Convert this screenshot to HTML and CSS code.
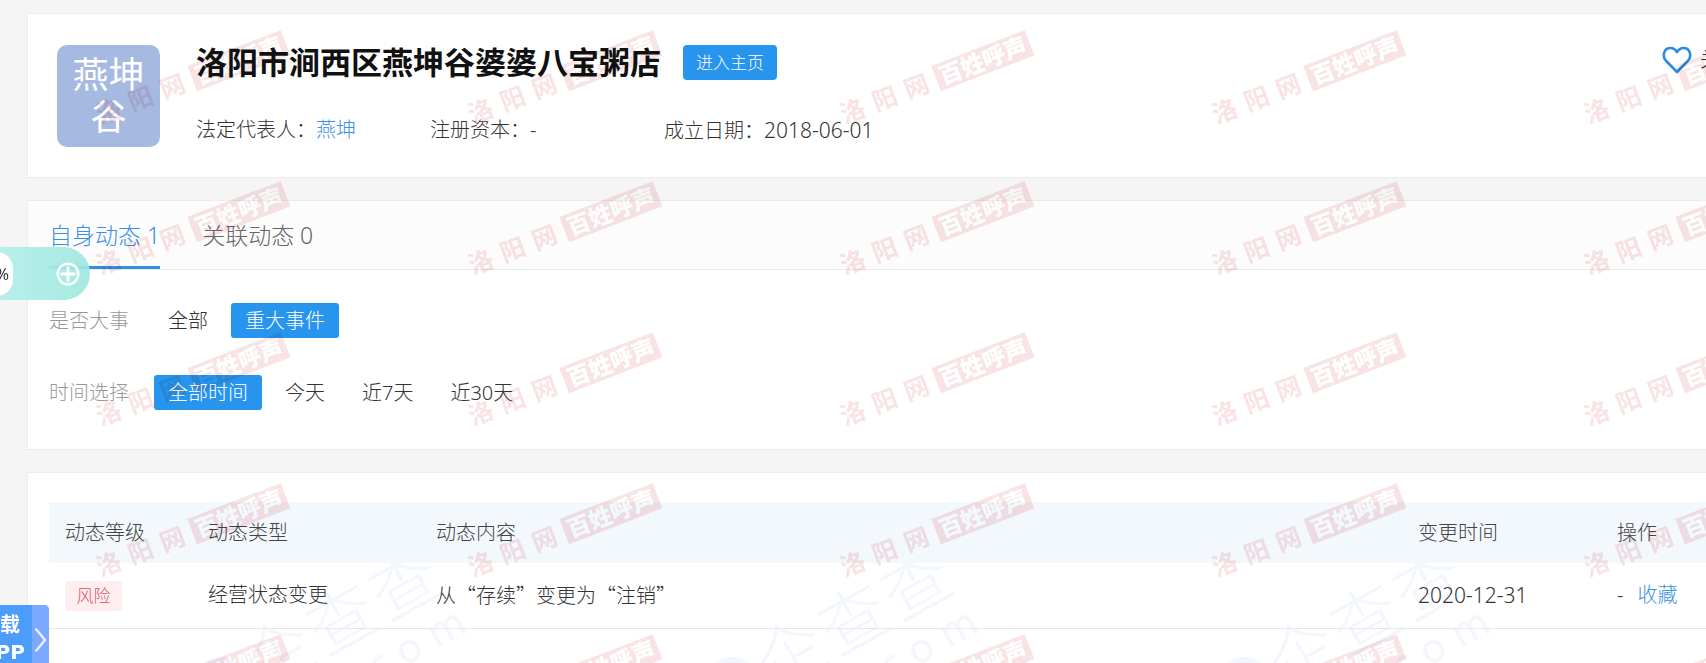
FILE: index.html
```
<!DOCTYPE html>
<html lang="zh-CN">
<head>
    <meta charset="UTF-8">
    <meta name="viewport" content="width=device-width, initial-scale=1.0">
    <title>洛阳市涧西区燕坤谷婆婆八宝粥店</title>
    <link rel="stylesheet" href="styles.css">
</head>
<body>
    <main class="container">
        <section class="card company">
            <div class="logo">燕坤谷</div>
            <div class="company-main">
                <div class="title-row">
                    <h1>洛阳市涧西区燕坤谷婆婆八宝粥店</h1>
                    <button type="button" class="btn-home">进入主页</button>
                </div>
                <div class="info-row">
                    <div class="info">法定代表人：<a href="#">燕坤</a></div>
                    <div class="info">注册资本：-</div>
                    <div class="info">成立日期：<span class="date">2018-06-01</span></div>
                </div>
            </div>
            <button type="button" class="follow">
                <svg width="30" height="28" viewBox="0 0 30 28" fill="none" stroke="#2b8be0" stroke-width="2.6" stroke-linejoin="round">
                    <path d="M15 26 L4.2 15 C-0.5 9.8 2.2 2 8.4 2 C11.4 2 13.6 3.6 15 6.2 C16.4 3.6 18.6 2 21.6 2 C27.8 2 30.5 9.8 25.8 15 Z"/>
                </svg>
                <span>关注</span>
            </button>
        </section>

        <section class="card">
            <nav class="tabs">
                <a href="#" class="tab active">自身动态 1</a>
                <a href="#" class="tab">关联动态 0</a>
            </nav>
            <div class="filters">
                <div class="filter">
                    <span class="filter-name">是否大事</span>
                    <button type="button" class="option">全部</button>
                    <button type="button" class="option on">重大事件</button>
                </div>
                <div class="filter">
                    <span class="filter-name">时间选择</span>
                    <button type="button" class="option on">全部时间</button>
                    <button type="button" class="option">今天</button>
                    <button type="button" class="option">近7天</button>
                    <button type="button" class="option">近30天</button>
                </div>
            </div>
        </section>

        <section class="card list">
            <div class="brand-marks" id="brandMarks" aria-hidden="true"></div>
            <table>
                <thead>
                    <tr>
                        <th class="col-level">动态等级</th>
                        <th class="col-type">动态类型</th>
                        <th>动态内容</th>
                        <th class="col-time">变更时间</th>
                        <th class="col-action">操作</th>
                    </tr>
                </thead>
                <tbody>
                    <tr>
                        <td><span class="risk">风险</span></td>
                        <td>经营状态变更</td>
                        <td class="quote">从“存续”变更为“注销”</td>
                        <td><span class="date">2020-12-31</span></td>
                        <td>-<a href="#" class="collect">收藏</a></td>
                    </tr>
                </tbody>
            </table>
        </section>
    </main>

    <div class="stamps" id="stamps" aria-hidden="true"></div>

    <div class="speed">
        <span class="speed-num">%</span>
        <svg width="24" height="24" viewBox="0 0 24 24" fill="none" stroke="#fff">
            <circle cx="12" cy="12" r="10.3" stroke-width="2.4"/>
            <path d="M12 4.5V19.5M4.5 12H19.5" stroke-width="3"/>
        </svg>
    </div>

    <div class="app">
        <a href="#" class="app-text">下载<br>APP</a>
        <button type="button" class="app-arrow" aria-label="展开">
            <svg width="13" height="26" viewBox="0 0 13 26" fill="none" stroke="#e9f1ff" stroke-width="2.4">
                <path d="M1.5 1.5L11 13L1.5 24.5"/>
            </svg>
        </button>
    </div>

    <script>
        let stamps = document.getElementById("stamps");
        let brandMarks = document.getElementById("brandMarks");

        // 5 x 5 水印
        for(let i=0;i<25;i++){
            stamps.innerHTML += `<div class="stamp-cell"><div class="stamp">
                <span>洛</span><span>阳</span><span>网</span><b>百姓呼声</b>
            </div></div>`;
        }

        // 列表背景
        for(let i=0;i<4;i++){
            brandMarks.innerHTML += `<div class="brand-cell"><div class="brand">
                <div class="brand-name"><i></i><span>企</span><span>查</span><span>查</span></div>
                <div class="brand-site"><span>.</span><span>c</span><span>o</span><span>m</span></div>
            </div></div>`;
        }
    </script>
</body>
</html>
```
FILE: styles.css
```
*{
    box-sizing: border-box;
}
body{
    margin: 0;
    height: 100vh;
    overflow: hidden;
    background: #f5f5f5;
    color: #333;
    font: 300 20px/30px "Noto Sans", "Noto Sans CJK SC", sans-serif;
}
a{
    color: #3b8ee8;
    text-decoration: none;
}
button{
    padding: 0;
    border: 0;
    background: none;
    color: inherit;
    font: inherit;
    cursor: pointer;
}
/* 內容比視窗寬一點 */
.container{
    display: flex;
    flex-direction: column;
    gap: 22px;
    margin: 13px -60px 0 27px;
}
.card{
    position: relative;
    border: 1px solid #ececec;
    background: #fff;
}
.date{
    font-size: 21px;
}

/* 公司資料 */
.company{
    display: flex;
    align-items: flex-start;
    padding: 31px 25px 30px 29px;
}
.logo{
    width: 103px;
    height: 102px;
    padding: 9px 15px;
    border-radius: 10px;
    background: #a6bae1;
    color: #fff;
    font-size: 36px;
    font-weight: 400;
    line-height: 42px;
    text-align: center;
}
.company-main{
    flex: 1;
    margin-left: 36px;
}
.title-row{
    display: flex;
    align-items: center;
    gap: 22px;
    height: 35px;
}
h1{
    margin: 0;
    color: #111;
    font-size: 31px;
    font-weight: 700;
    line-height: 35px;
}
.btn-home{
    width: 94px;
    height: 35px;
    border-radius: 4px;
    background: #2795ee;
    color: #fff;
    font-size: 17px;
}
.info-row{
    display: flex;
    margin-top: 35px;
}
.info{
    width: 234px;
}
.follow{
    display: flex;
    align-items: center;
    gap: 8px;
}

/* 分頁 */
.tabs{
    display: flex;
    gap: 42px;
    padding: 0 21px;
    border-bottom: 1px solid #eaeaea;
    background: #fcfcfc;
}
.tab{
    padding: 19px 0 16px;
    border-bottom: 3px solid transparent;
    color: #666;
    font-size: 23px;
}
.tab.active{
    border-color: #2f8fe0;
    color: #3b8ee8;
}
.filters{
    display: flex;
    flex-direction: column;
    gap: 37px;
    padding: 33px 21px 39px;
}
.filter{
    display: flex;
    align-items: center;
    gap: 9px;
}
.filter-name{
    width: 96px;
    color: #999;
}
.option{
    height: 35px;
    padding: 0 14px;
    border-radius: 3px;
}
.option.on{
    background: #2795ee;
    color: #fff;
}

/* 列表 */
.list{
    min-height: 260px;
    padding: 29px 21px;
}
table{
    position: relative;
    width: 100%;
    border-collapse: collapse;
    table-layout: fixed;
}
th, td{
    padding: 0 16px;
    font-weight: 300;
    text-align: left;
}
th{
    height: 61px;
    background: #f3f8fc;
    color: #444;
}
td{
    height: 65px;
    border-bottom: 1px solid #e8e8e8;
}
.quote{
    font-family: "Noto Sans CJK SC", sans-serif;
}
.col-level{
    width: 143px;
}
.col-type{
    width: 228px;
}
.col-time{
    width: 199px;
}
.col-action{
    width: 143px;
}
.risk{
    display: inline-block;
    width: 57px;
    border-radius: 2px;
    background: #ffeef0;
    color: #e0506a;
    font-size: 17px;
    text-align: center;
    vertical-align: middle;
}
.collect{
    margin-left: 14px;
}

/* 列表背景的淺藍字 */
.brand-marks{
    position: absolute;
    inset: 0;
    display: flex;
    overflow: hidden;
    color: #f3f6fd;
}
.brand-cell{
    flex: none;
    width: 512px;
}
.brand{
    width: 300px;
    margin: 126px 0 0 134px;
    transform: rotate(-29deg);
}
.brand-name{
    display: flex;
    align-items: center;
    justify-content: flex-end;
    gap: 4px;
    font-size: 68px;
    line-height: 76px;
}
.brand-name i{
    width: 56px;
    height: 56px;
    border: 6px solid #f3f6fd;
    border-radius: 50%;
}
.brand-site{
    display: flex;
    justify-content: flex-end;
    gap: 12px;
    font-size: 40px;
    font-weight: 400;
    line-height: 40px;
}

/* 紅色水印 */
.stamps{
    position: fixed;
    top: 0;
    left: 0;
    display: grid;
    grid-template-columns: repeat(5, 372px);
    grid-auto-rows: 151px;
    mix-blend-mode: multiply;
    pointer-events: none;
}
.stamp-cell{
    padding: 64px 0 0 90px;
}
.stamp{
    display: flex;
    align-items: center;
    gap: 9px;
    width: 210px;
    color: #f9e3e4;
    font-size: 25px;
    font-weight: 700;
    line-height: 27px;
    transform: rotate(-21deg);
}
.stamp b{
    width: 100px;
    background: #f8e3e5;
    color: #fff;
    font-size: 23px;
    text-align: center;
}

/* 左側浮動 */
.speed{
    position: fixed;
    top: 247px;
    left: -20px;
    display: flex;
    align-items: center;
    justify-content: space-between;
    width: 110px;
    height: 53px;
    padding-right: 10px;
    border-radius: 0 27px 27px 0;
    background: linear-gradient(to right, rgba(184, 240, 234, 0.95), rgba(156, 231, 223, 0.9));
}
.speed-num{
    width: 33px;
    height: 44px;
    padding-right: 4px;
    border-radius: 22px;
    background: #fff;
    font-size: 16px;
    font-weight: 400;
    line-height: 44px;
    text-align: right;
}
.app{
    position: fixed;
    top: 605px;
    left: -20px;
    display: flex;
    width: 69px;
    height: 70px;
    border-radius: 5px;
    background: #4b9cfb;
    overflow: hidden;
}
.app-text{
    width: 52px;
    padding-top: 7px;
    color: #fff;
    font-family: "DejaVu Sans", "Noto Sans CJK SC", sans-serif;
    font-size: 20px;
    font-weight: 700;
    line-height: 27px;
}
.app-arrow{
    display: flex;
    align-items: center;
    justify-content: center;
    width: 17px;
    background: #7aa9fd;
}
```
